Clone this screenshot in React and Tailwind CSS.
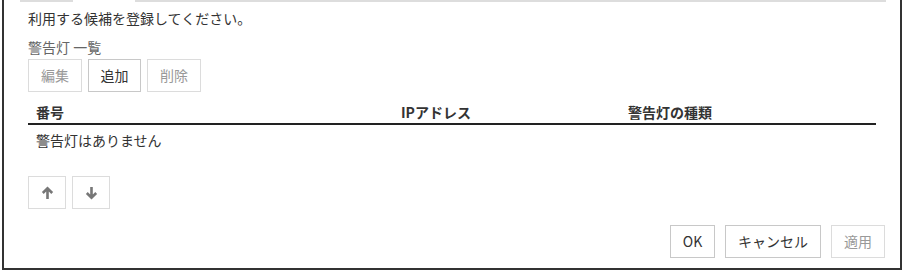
import React from 'react';

const font = { fontFamily: '"Noto Sans CJK JP", "Noto Sans", sans-serif' };

function Btn({ children, strong, className = '' }) {
  return (
    <button
      className={`h-[33px] border bg-white text-[14px] flex items-center justify-center ${
        strong ? 'border-[#c8c8c8] text-[#333]' : 'border-[#dcdcdc] text-[#999]'
      } ${className}`}
    >
      {children}
    </button>
  );
}

function Arrow({ down }) {
  return (
    <svg width="13" height="14" viewBox="0 0 13 14" className={down ? 'rotate-180' : ''}>
      <path d="M6.5 13V2.5M1.8 7L6.5 2.3 11.2 7" stroke="#777" strokeWidth="2.6" fill="none" />
    </svg>
  );
}

export default function App() {
  return (
    <div className="w-[904px] h-[272px] bg-white" style={font}>
      <div className="ml-[2px] w-[900px] h-[270px] border-l-2 border-r-2 border-b-2 border-[#333] flex flex-col">
        <div className="flex h-[2px] pl-[16px]">
          <div className="w-[53px] bg-[#dddddd]" />
          <div className="w-[62px]" />
          <div className="w-[751px] bg-[#dddddd]" />
        </div>
        <div className="pl-[24px] pr-[14px] flex flex-col flex-1">
          <div className="mt-[6px] text-[14px] leading-[20px] text-[#333]">利用する候補を登録してください。</div>
          <div className="mt-[10px] text-[14px] leading-[18px] text-[#666]">警告灯 一覧</div>
          <div className="flex gap-[6px] mt-[3px]">
            <Btn className="w-[54px]">編集</Btn>
            <Btn strong className="w-[53px]">追加</Btn>
            <Btn className="w-[54px]">削除</Btn>
          </div>
          <div className="mt-[9px] w-[848px] flex border-b-2 border-[#222] h-[24px] items-center text-[14px] font-bold text-[#333]">
            <div className="w-[365px] pl-[8px]">番号</div>
            <div className="w-[227px] pl-[8px]">IPアドレス</div>
            <div className="flex-1 pl-[8px]">警告灯の種類</div>
          </div>
          <div className="mt-[4px] pl-[8px] text-[14px] leading-[22px] text-[#333]">警告灯はありません</div>
          <div className="flex gap-[6px] mt-[25px]">
            <Btn className="w-[38px]"><Arrow /></Btn>
            <Btn className="w-[38px]"><Arrow down /></Btn>
          </div>
          <div className="flex justify-end gap-[10px] mt-[16px] pr-[1px]">
            <Btn strong className="w-[45px] !text-[#333]">OK</Btn>
            <Btn strong className="w-[96px] !text-[#333]">キャンセル</Btn>
            <Btn className="w-[54px]">適用</Btn>
          </div>
        </div>
      </div>
    </div>
  );
}
